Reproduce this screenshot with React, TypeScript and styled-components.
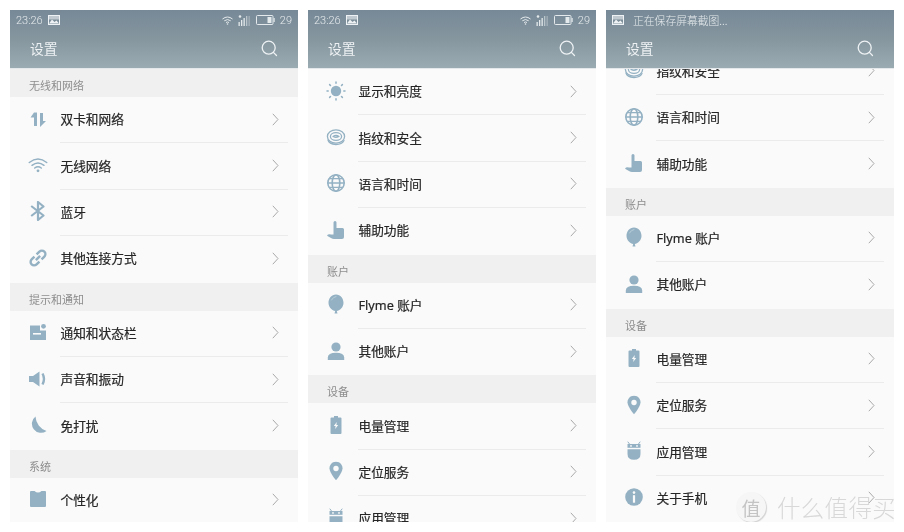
import React from "react";
import styled, { createGlobalStyle } from "styled-components";

const Global = createGlobalStyle`
  html, body { margin: 0; padding: 0; background: #fff; }
  body { font-family: "Noto Sans", "Noto Sans CJK SC", sans-serif; }
`;

const Page = styled.div`
  display: flex;
  gap: 10px;
  padding: 10px;
  width: 904px;
  height: 532px;
  box-sizing: border-box;
  background: #fff;
`;

const Phone = styled.section`
  position: relative;
  width: 288px;
  height: 512px;
  display: flex;
  flex-direction: column;
  overflow: hidden;
  background: #fafafa;
  filter: blur(0.3px);
`;

const AppBar = styled.header`
  flex: 0 0 59px;
  display: flex;
  flex-direction: column;
  background: linear-gradient(180deg, #778997 0%, #85969f 50%, #9babb2 100%);
  border-bottom: 1px solid #e4e8ea;
  box-sizing: border-box;
  color: #e6ebee;
`;

const StatusBar = styled.div`
  flex: 0 0 20px;
  display: flex;
  align-items: center;
  padding: 0 6px 0 6px;
  font-family: "Roboto", sans-serif;
  font-weight: 300;
  font-size: 11px;
  gap: 5px;
  color: #e4e9ec;
`;

const Spacer = styled.div`
  flex: 1;
`;

const StatusIcons = styled.div`
  display: flex;
  align-items: center;
  gap: 5px;
`;

const Notice = styled.span`
  font-family: "Noto Sans CJK SC", sans-serif;
  font-size: 10.8px;
  margin-left: 4px;
`;

const TitleRow = styled.div`
  flex: 1;
  display: flex;
  align-items: center;
  justify-content: space-between;
  padding: 0 20px 0 20px;
  margin-top: -2px;
`;

const Title = styled.h1`
  margin: 0;
  font-family: "Noto Sans CJK SC", sans-serif;
  font-size: 13.8px;
  font-weight: 400;
  color: #edf1f3;
`;

const Viewport = styled.div`
  flex: 1;
  overflow: hidden;
`;

const List = styled.div<{ $offset: number }>`
  margin-top: ${(p) => p.$offset}px;
`;

const SectionLabel = styled.div`
  height: 28px;
  box-sizing: border-box;
  padding: 8px 0 0 19px;
  background: #f0f0f0;
  font-family: "Noto Sans CJK SC", sans-serif;
  font-size: 11px;
  line-height: 16px;
  color: #8d8d8d;
`;

const Row = styled.div`
  height: 46.4px;
  display: flex;
  align-items: stretch;
  box-sizing: border-box;
`;

const IconBox = styled.div`
  flex: 0 0 50px;
  display: flex;
  align-items: center;
  justify-content: center;
  padding: 0 0 3px 6px;
  box-sizing: border-box;
  color: #93b1c3;
`;

const RowBody = styled.div<{ $last: boolean }>`
  flex: 1;
  display: flex;
  align-items: center;
  justify-content: space-between;
  margin-right: 10px;
  padding: 0 9px 2px 0.5px;
  border-bottom: 1.4px solid ${(p) => (p.$last ? "transparent" : "#ebebeb")};
`;

const RowLabel = styled.span`
  font-family: "Noto Sans", "Noto Sans CJK SC", sans-serif;
  font-size: 12.7px;
  color: #262626;
  -webkit-text-stroke: 0.2px #262626;
`;

const ChevronMark = styled.svg`
  margin-top: 1px;
`;

const Watermark = styled.div`
  position: absolute;
  left: 130px;
  top: 480px;
  display: flex;
  align-items: center;
  gap: 11px;
  white-space: nowrap;
`;

const WatermarkBadge = styled.div`
  width: 30px;
  height: 30px;
  border-radius: 50%;
  background: #f6f6f6;
  box-shadow: 1px 1px 1px #d2d2d2;
  display: flex;
  align-items: center;
  justify-content: center;
  font-family: "Noto Sans CJK SC", sans-serif;
  font-size: 19px;
  color: #c4c4c4;
`;

const WatermarkText = styled.div`
  font-family: "Noto Sans CJK SC", sans-serif;
  font-weight: 300;
  font-size: 23.5px;
  letter-spacing: 0.3px;
  color: #d8d8d8;
`;

const I = ({ children }: { children: React.ReactNode }) => (
  <svg width="20" height="20" viewBox="0 0 20 20" fill="currentColor">
    {children}
  </svg>
);

const line = { fill: "none", stroke: "currentColor", strokeLinecap: "round" as const, strokeLinejoin: "round" as const };

const icons: Record<string, React.ReactNode> = {
  transfer: (
    <I>
      <path d="M6 3.5H9V17H6V8.5H2.5Z" />
      <path d="M12 4H15V12H18L12 18Z" />
    </I>
  ),
  wifi: (
    <I>
      <g {...line} strokeWidth="1.5">
        <path d="M1.3 7.5Q10 .5 18.7 7.5" />
        <path d="M4 10.3Q10 5.6 16 10.3" />
        <path d="M6.7 13Q10 10.7 13.3 13" />
      </g>
      <circle cx="10" cy="15.8" r="1.4" />
    </I>
  ),
  bluetooth: (
    <I>
      <path {...line} strokeWidth="2.2" strokeLinecap="butt" d="M3.2 5L15.500 14.500 10 19V1L15.500 5.500 3.200 15" />
    </I>
  ),
  link: (
    <I>
      <g {...line} strokeWidth="2.400" strokeLinecap="butt" transform="rotate(-45 10 10)">
        <path d="M8.500 6.500H4.500A3.500 3.500 0 0 0 4.500 13.500H8.500" />
        <path d="M11.500 6.500H15.500A3.500 3.500 0 0 1 15.500 13.500H11.500" />
        <path d="M7 10H13" />
      </g>
    </I>
  ),
  note: (
    <I>
      <path d="M2 3.500H12V8.500H18V18H2Z" />
      <circle cx="15.500" cy="4.300" r="2.400" />
      <rect x="5" y="11" width="8" height="1.600" fill="#fafafa" />
    </I>
  ),
  sound: (
    <I>
      <path d="M1 7H5L11.500 2.500V17.500L5 13H1Z" />
      <path {...line} strokeWidth="2.400" strokeLinecap="butt" d="M14.500 4.500Q17.500 10 14.500 15.500" />
    </I>
  ),
  moon: (
    <I>
      <path d="M7.500 1.500A9 9 0 1 0 18.500 16 16 16 0 0 1 7.500 1.500Z" />
    </I>
  ),
  shirt: (
    <I>
      <path d="M3 2H6.500Q10 5 13.500 2H17Q18 2 18 3V17Q18 18 17 18H3Q2 18 2 17V3Q2 2 3 2Z" />
    </I>
  ),
  sun: (
    <I>
      <circle cx="10" cy="10" r="5.200" />
      <g {...line} strokeWidth="1.500">
        <path d="M10 1V2.200M10 17.800V19M1 10H2.200M17.800 10H19M3.600 3.600L4.500 4.500M15.500 15.500L16.400 16.400M3.600 16.400L4.500 15.500M15.500 4.500L16.400 3.600" />
      </g>
    </I>
  ),
  print: (
    <I>
      <g {...line} strokeWidth="1.300">
        <ellipse cx="10" cy="9.500" rx="8.600" ry="6.600" />
        <ellipse cx="10" cy="9.500" rx="5.600" ry="3.900" />
        <path d="M7 9.500Q10 7.500 13 9.500Q10 11 8 10" />
        <path d="M2 13Q3 17 10 17.500Q16 17.500 18 13.500" />
      </g>
    </I>
  ),
  globe: (
    <I>
      <g {...line} strokeWidth="1.600">
        <circle cx="10" cy="10" r="8.200" />
        <ellipse cx="10" cy="10" rx="3.800" ry="8.200" />
        <path d="M2 10H18M3.200 5.700H16.800M3.200 14.300H16.800" strokeWidth="1.300" />
      </g>
    </I>
  ),
  hand: (
    <I>
      <path d="M7.500 2.500Q7.500 1 9 1T10.500 2.500V8H16.500Q18 8 18 9.600V17Q18 19 16 19H8Q6.500 19 5 18L1 15.800Q2 13.800 5 14.500L7.500 14.500Z" />
    </I>
  ),
  balloon: (
    <I>
      <path d="M10 0.500C14.500 0.500 17.500 4.500 17.500 9C17.500 13.500 13.500 16.500 10.800 17L11.500 19.500H8.500L9.200 17C6.500 16.500 2.500 13.500 2.500 9C2.500 4.500 5.500 .5 10 .5Z" />
      <path {...line} stroke="#b9ced9" strokeWidth="1" d="M5.500 6Q7 3 10 2.500" />
    </I>
  ),
  person: (
    <I>
      <circle cx="10" cy="6" r="4.600" />
      <path d="M1.800 19V16.500Q1.800 12 10 11.800Q18.200 12 18.200 16.500V19Z" />
    </I>
  ),
  battery: (
    <I>
      <path d="M8 1H12V2.500H14.500Q15.500 2.500 15.500 3.500V18Q15.500 19 14.500 19H5.500Q4.500 19 4.500 18V3.500Q4.500 2.500 5.500 2.500H8Z" />
      <path d="M10.800 7L7.800 11H9.600L9.200 14L12.200 10H10.400Z" fill="#fafafa" />
    </I>
  ),
  pin: (
    <I>
      <path d="M10 .8C5.500 .8 3.500 4.300 3.500 7.300C3.500 11.800 10 19.300 10 19.300C10 19.300 16.500 11.800 16.500 7.300C16.500 4.300 14.500 .8 10 .8Z" />
      <circle cx="10" cy="7.500" r="2.700" fill="#fafafa" />
    </I>
  ),
  android: (
    <I>
      <path {...line} strokeWidth="1" d="M4 1L5.500 3M16 1L14.500 3" />
      <path d="M3.500 3H16.500V6.800H3.500Z" />
      <path d="M3.500 8.300H16.500V13Q16.500 18.800 10 18.800T3.500 13Z" />
      <circle cx="7" cy="4.900" r="0.900" fill="#fafafa" />
      <circle cx="13" cy="4.900" r="0.900" fill="#fafafa" />
    </I>
  ),
  info: (
    <I>
      <circle cx="10" cy="10" r="8.800" />
      <circle cx="10" cy="5.600" r="1.300" fill="#fafafa" />
      <rect x="8.900" y="8.200" width="2.200" height="7.500" fill="#fafafa" />
    </I>
  ),
};

const Chevron = () => (
  <ChevronMark width="7" height="13" viewBox="0 0 7 13" fill="none" stroke="#a9a9a9" strokeWidth="1">
    <path d="M.8 .8L6 6.500.8 12.200" />
  </ChevronMark>
);

const Search = () => (
  <svg width="17" height="17" viewBox="0 0 17 17" fill="none" stroke="#eef2f4" strokeWidth="1.300" strokeLinecap="round">
    <circle cx="7.700" cy="7.700" r="6.500" />
    <path d="M12.400 12.400L15.500 15.500" />
  </svg>
);

const PictureIcon = () => (
  <svg width="12" height="10" viewBox="0 0 12 10">
    <rect x=".5" y=".5" width="11" height="9" fill="none" stroke="#eef2f4" />
    <path d="M1 8.500L4 4.500 6.500 7 8.500 5.500 11 8.500Z" fill="#eef2f4" />
    <rect x="1" y="1" width="10" height="3.500" fill="#eef2f4" opacity="0.6" />
  </svg>
);

const StatusWifi = () => (
  <svg width="11" height="9" viewBox="0 0 11 9" fill="none" stroke="#e4e9ec" strokeWidth="1">
    <path d="M.5 3Q5.500-1 10.500 3M2.300 4.800Q5.500 2.300 8.700 4.800M4 6.500Q5.500 5.400 7 6.500" />
    <circle cx="5.500" cy="8" r=".8" fill="#e4e9ec" stroke="none" />
  </svg>
);

const StatusSignal = () => (
  <svg width="13" height="11" viewBox="0 0 13 11" fill="#e4e9ec">
    <circle cx="2" cy="1.500" r="1.300" />
    <rect x=".5" y="7" width="1.300" height="4" />
    <rect x="3" y="5" width="1.300" height="6" />
    <rect x="5.500" y="3" width="1.300" height="8" />
    <rect x="8" y="1" width="1.300" height="10" opacity=".6" />
    <rect x="10.500" y="1" width="1.300" height="10" opacity=".4" />
  </svg>
);

const StatusBattery = () => (
  <svg width="19" height="10" viewBox="0 0 19 10">
    <rect x=".5" y=".5" width="16.500" height="9" rx="1" fill="none" stroke="#e4e9ec" />
    <rect x="11.500" y="2" width="4" height="6" fill="#e4e9ec" />
    <rect x="17.500" y="3" width="1.200" height="4" fill="#e4e9ec" />
  </svg>
);

type Item = { icon: string; label: string };
type Section = { title?: string; items: Item[] };

const firstList: Section[] = [
  {
    title: "无线和网络",
    items: [
      { icon: "transfer", label: "双卡和网络" },
      { icon: "wifi", label: "无线网络" },
      { icon: "bluetooth", label: "蓝牙" },
      { icon: "link", label: "其他连接方式" },
    ],
  },
  {
    title: "提示和通知",
    items: [
      { icon: "note", label: "通知和状态栏" },
      { icon: "sound", label: "声音和振动" },
      { icon: "moon", label: "免打扰" },
    ],
  },
  { title: "系统", items: [{ icon: "shirt", label: "个性化" }] },
];

const secondList: Section[] = [
  {
    items: [
      { icon: "sun", label: "显示和亮度" },
      { icon: "print", label: "指纹和安全" },
      { icon: "globe", label: "语言和时间" },
      { icon: "hand", label: "辅助功能" },
    ],
  },
  {
    title: "账户",
    items: [
      { icon: "balloon", label: "Flyme 账户" },
      { icon: "person", label: "其他账户" },
    ],
  },
  {
    title: "设备",
    items: [
      { icon: "battery", label: "电量管理" },
      { icon: "pin", label: "定位服务" },
      { icon: "android", label: "应用管理" },
      { icon: "info", label: "关于手机" },
    ],
  },
];

const Screen = ({
  sections,
  offset = 0,
  notice,
  children,
}: {
  sections: Section[];
  offset?: number;
  notice?: string;
  children?: React.ReactNode;
}) => (
  <Phone>
    <AppBar>
      <StatusBar>
        {notice ? (
          <>
            <PictureIcon />
            <Notice>{notice}</Notice>
          </>
        ) : (
          <>
            <span>23:26</span>
            <PictureIcon />
            <Spacer />
            <StatusIcons>
              <StatusWifi />
              <StatusSignal />
              <StatusBattery />
              <span>29</span>
            </StatusIcons>
          </>
        )}
      </StatusBar>
      <TitleRow>
        <Title>设置</Title>
        <Search />
      </TitleRow>
    </AppBar>
    <Viewport>
      <List $offset={offset}>
        {sections.map((s, i) => (
          <div key={i}>
            {s.title && <SectionLabel>{s.title}</SectionLabel>}
            {s.items.map((it, j) => (
              <Row key={it.label}>
                <IconBox>{icons[it.icon]}</IconBox>
                <RowBody $last={j === s.items.length - 1}>
                  <RowLabel>{it.label}</RowLabel>
                  <Chevron />
                </RowBody>
              </Row>
            ))}
          </div>
        ))}
      </List>
    </Viewport>
    {children}
  </Phone>
);

export default function App() {
  return (
    <Page>
      <Global />
      <Screen sections={firstList} />
      <Screen sections={secondList} />
      <Screen sections={secondList} offset={-66.8} notice="正在保存屏幕截图...">
        <Watermark>
          <WatermarkBadge>值</WatermarkBadge>
          <WatermarkText>什么值得买</WatermarkText>
        </Watermark>
      </Screen>
    </Page>
  );
}
